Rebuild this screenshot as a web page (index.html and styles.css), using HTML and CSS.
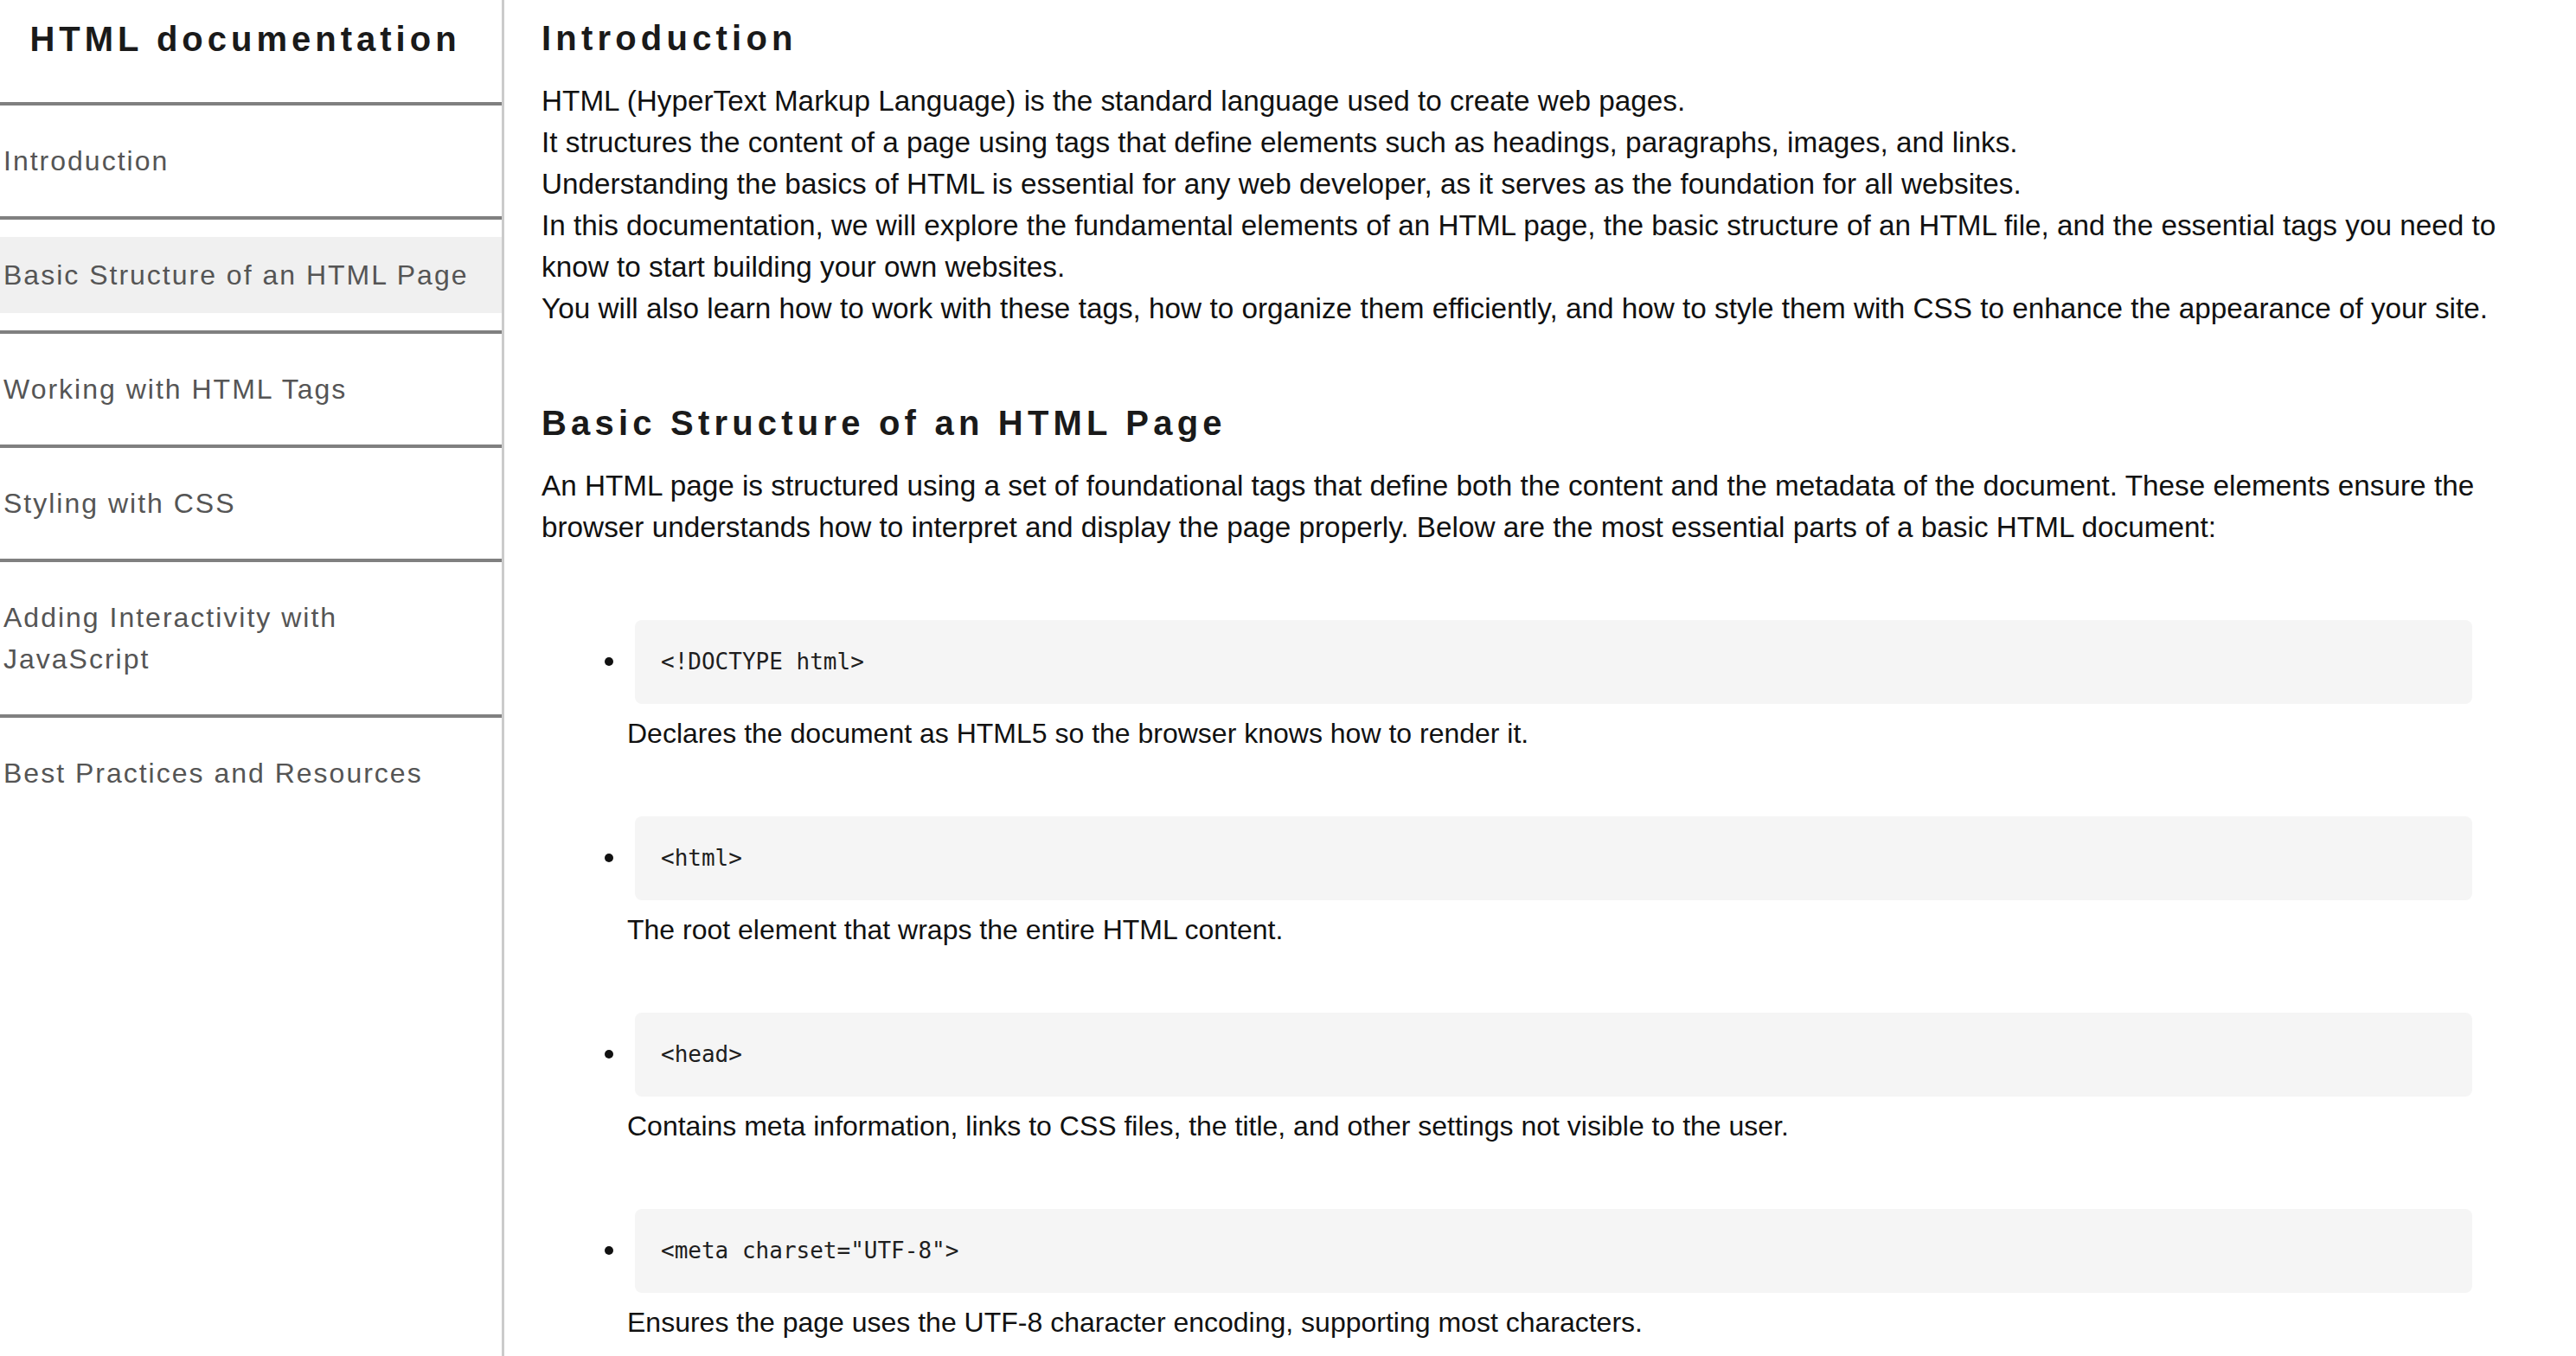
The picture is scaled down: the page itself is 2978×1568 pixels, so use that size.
FILE: index.html
```html
<!DOCTYPE html>
<html lang="en">
<head>
<meta charset="UTF-8">
<title>HTML documentation</title>
<link rel="stylesheet" href="styles.css">
</head>
<body>
<div class="layout">
  <aside class="sidebar">
    <header class="brand">HTML documentation</header>
    <nav>
      <ul class="nav">
        <li class="nav-item"><a class="nav-link" href="#introduction">Introduction</a></li>
        <li class="nav-item"><a class="nav-link active" href="#basic-structure">Basic Structure of an HTML Page</a></li>
        <li class="nav-item"><a class="nav-link" href="#tags">Working with HTML Tags</a></li>
        <li class="nav-item"><a class="nav-link" href="#css">Styling with CSS</a></li>
        <li class="nav-item"><a class="nav-link" href="#js">Adding Interactivity with JavaScript</a></li>
        <li class="nav-item"><a class="nav-link" href="#best">Best Practices and Resources</a></li>
      </ul>
    </nav>
  </aside>
  <main class="content">
    <section class="section" id="introduction">
      <h2 class="section-title">Introduction</h2>
      <p class="text">HTML (HyperText Markup Language) is the standard language used to create web pages.<br>It structures the content of a page using tags that define elements such as headings, paragraphs, images, and links.<br>Understanding the basics of HTML is essential for any web developer, as it serves as the foundation for all websites.<br>In this documentation, we will explore the fundamental elements of an HTML page, the basic structure of an HTML file, and the essential tags you need to know to start building your own websites.<br>You will also learn how to work with these tags, how to organize them efficiently, and how to style them with CSS to enhance the appearance of your site.</p>
    </section>
    <section class="section" id="basic-structure">
      <h2 class="section-title">Basic Structure of an HTML Page</h2>
      <p class="text">An HTML page is structured using a set of foundational tags that define both the content and the metadata of the document. These elements ensure the browser understands how to interpret and display the page properly. Below are the most essential parts of a basic HTML document:</p>
      <ul class="tag-list">
        <li class="tag-item"><code class="code">&lt;!DOCTYPE html&gt;</code><p class="desc">Declares the document as HTML5 so the browser knows how to render it.</p></li>
        <li class="tag-item"><code class="code">&lt;html&gt;</code><p class="desc">The root element that wraps the entire HTML content.</p></li>
        <li class="tag-item"><code class="code">&lt;head&gt;</code><p class="desc">Contains meta information, links to CSS files, the title, and other settings not visible to the user.</p></li>
        <li class="tag-item"><code class="code">&lt;meta charset="UTF-8"&gt;</code><p class="desc">Ensures the page uses the UTF-8 character encoding, supporting most characters.</p></li>
      </ul>
    </section>
  </main>
</div>
</body>
</html>
```
FILE: styles.css
```css
html, body {
  margin: 0;
  padding: 0;
  background: #ffffff;
}

body {
  font-family: "Liberation Sans", Arial, Helvetica, sans-serif;
  color: #111111;
  height: 1568px;
  overflow: hidden;
}

.layout {
  display: flex;
  min-height: 100vh;
}

.sidebar {
  flex: 0 0 583px;
  box-sizing: border-box;
  border-right: 3px solid #cbcbcb;
  min-height: 100vh;
}

.brand {
  font-size: 40px;
  font-weight: 700;
  letter-spacing: 5px;
  line-height: 48px;
  text-align: center;
  color: #1a1a1a;
  padding: 21px 13px 49px 0;
}

.nav {
  list-style: none;
  margin: 0;
  padding: 0;
}

.nav-item {
  border-top: 4px solid #808080;
  padding: 20px 0;
}

.nav-link {
  display: block;
  padding: 20px 30px 20px 4px;
  font-size: 32px;
  letter-spacing: 2px;
  line-height: 48px;
  color: #555555;
  text-decoration: none;
}

.nav-link.active {
  background: #f0f0f0;
}

.content {
  flex: 1;
  padding: 20px 40px 0 43px;
  min-width: 0;
}

.section-title {
  margin: 0 0 25px;
  font-size: 40px;
  font-weight: 700;
  letter-spacing: 5.2px;
  line-height: 48px;
  color: #1a1a1a;
}

.section + .section {
  margin-top: 84px;
}

.text {
  margin: 0;
  font-size: 33.3px;
  line-height: 48px;
  color: #111111;
}

.tag-list {
  margin: 0;
  padding: 11px 0 0 99px;
  list-style: disc;
  font-size: 32px;
  line-height: 48px;
}

.tag-item {
  margin-top: 72px;
}

.code {
  display: block;
  margin: 0 80px 10px 9px;
  padding: 30px;
  background: #f5f5f5;
  border-radius: 8px;
  font-family: "DejaVu Sans Mono", "Liberation Mono", monospace;
  font-size: 26px;
  line-height: 37px;
  color: #1e1e1e;
}

.desc {
  margin: 0;
  font-size: 32px;
  line-height: 48px;
  color: #111111;
}
```
